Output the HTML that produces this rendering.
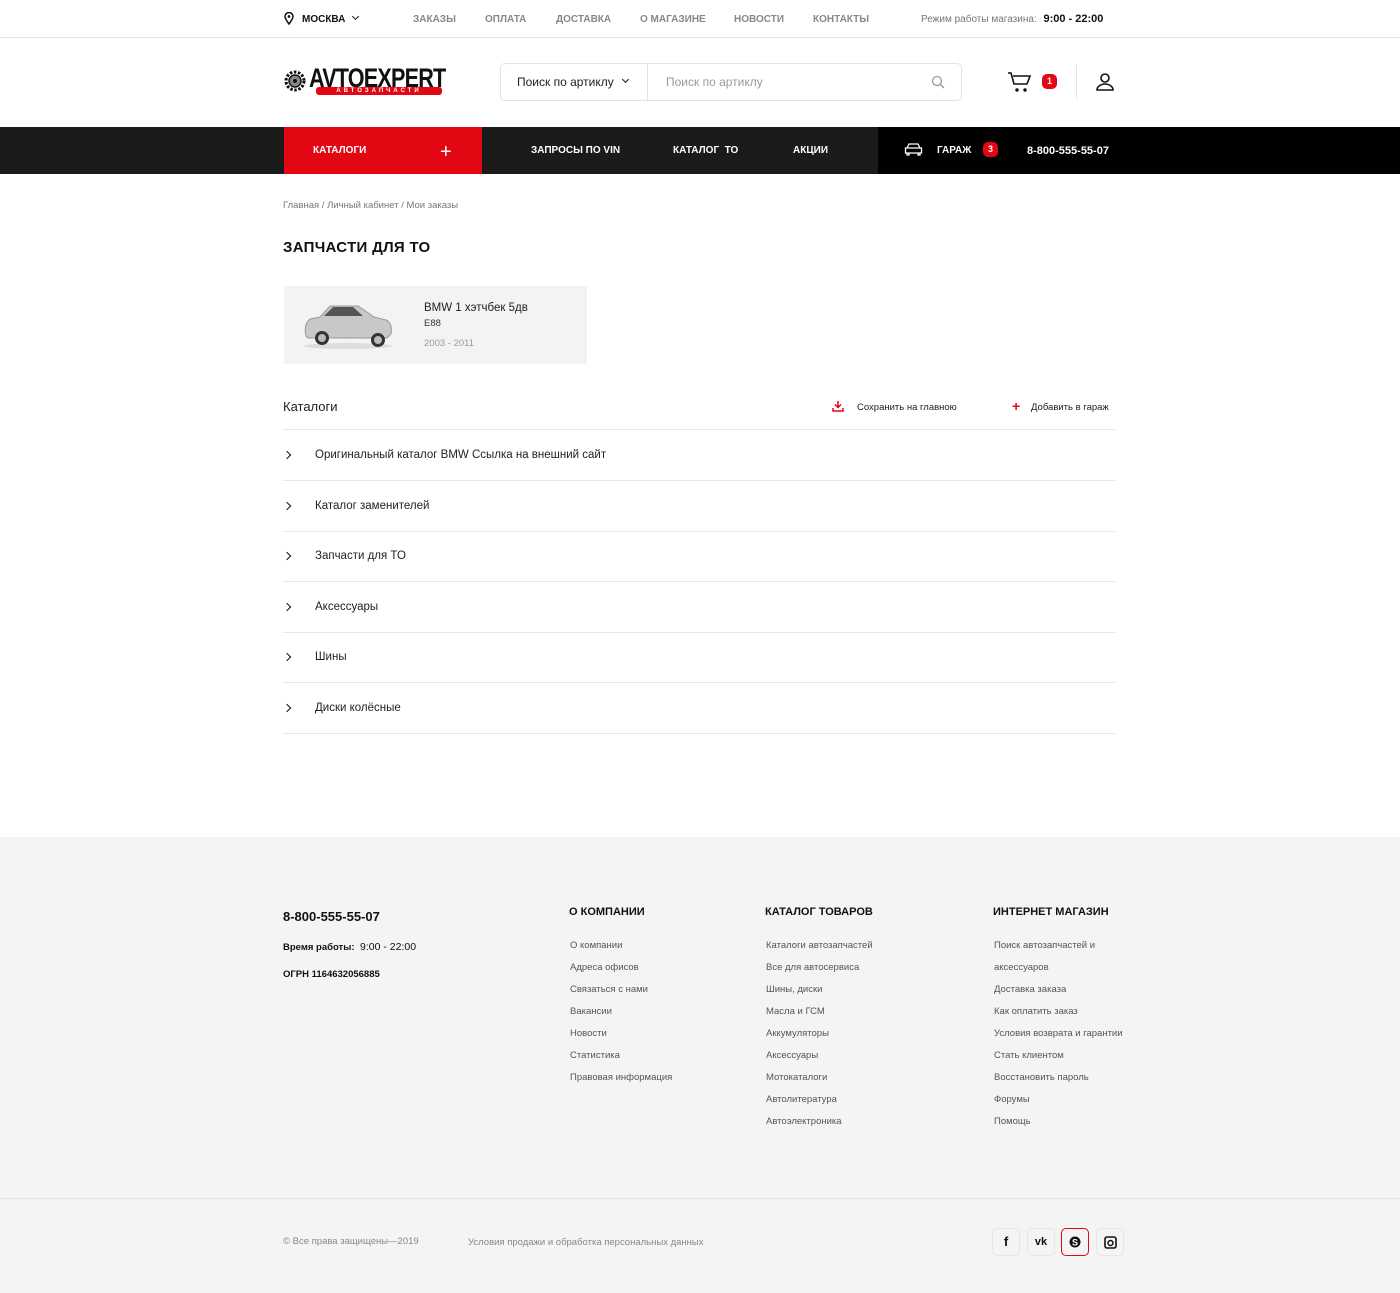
<!DOCTYPE html>
<html><head><meta charset="utf-8"><style>
*{margin:0;padding:0;box-sizing:border-box}
body{width:1400px;height:1293px;background:#fff;font-family:"Liberation Sans","Noto Sans CJK SC",sans-serif;color:#111;position:relative;overflow:hidden}
.a{position:absolute;white-space:nowrap}
.top{font-size:10px;font-weight:bold;color:#888;top:14px}
.nav{font-size:10px;font-weight:bold;color:#fff;top:145px}
.row{position:absolute;left:283px;width:832px;height:51px;border-bottom:1px solid #e6e6e6;font-size:11.5px;color:#222}
.row span{position:absolute;left:32px;top:19px}
.row i{position:absolute;left:1px;top:22px;width:6px;height:6px;border-top:1.5px solid #111;border-right:1.5px solid #111;transform:rotate(45deg)}
.fh{font-size:11px;font-weight:bold;top:906px}
.fl{font-size:9.5px;color:#555;line-height:22px;top:935px}
.soc{position:absolute;top:1228px;width:28px;height:28px;border:1px solid #e6e6e6;border-radius:5px;background:#f4f4f4;font-size:13px;font-weight:bold;text-align:center;line-height:26px}
</style></head><body>
<div class="a" style="top:0;left:0;width:1400px;height:38px;border-bottom:1px solid #e4e4e4"></div>
<svg class="a" style="left:284px;top:12px" width="10" height="13" viewBox="0 0 10 13"><path d="M5 12C2 8 1 6 1 4.5a4 4 0 018 0C9 6 8 8 5 12z" fill="none" stroke="#111" stroke-width="1.5"/><circle cx="5" cy="4.5" r="1.4" fill="#111"/></svg>
<div class="a" style="left:302px;top:14px;font-size:10px;font-weight:bold">МОСКВА</div>
<div class="a" style="left:353px;top:14px;width:5px;height:5px;border-right:1.5px solid #111;border-bottom:1.5px solid #111;transform:rotate(45deg)"></div>
<div class="a top" style="left:413px">ЗАКАЗЫ</div>
<div class="a top" style="left:485px">ОПЛАТА</div>
<div class="a top" style="left:556px">ДОСТАВКА</div>
<div class="a top" style="left:640px">О МАГАЗИНЕ</div>
<div class="a top" style="left:734px">НОВОСТИ</div>
<div class="a top" style="left:813px">КОНТАКТЫ</div>
<div class="a" style="left:921px;top:13px;font-size:10px;color:#777">Режим работы магазина: <b style="color:#111;font-size:11px;margin-left:4px">9:00 - 22:00</b></div>

<!-- logo -->
<svg class="a" style="left:284px;top:70px" width="22" height="22" viewBox="0 0 22 22"><circle cx="11" cy="11" r="9" fill="none" stroke="#111" stroke-width="3" stroke-dasharray="2.5 1.6"/><circle cx="11" cy="11" r="6" fill="#888" stroke="#111" stroke-width="1.5"/><circle cx="11" cy="11" r="2" fill="#111"/></svg>
<div class="a" style="left:309px;top:65px;font-size:27px;font-weight:900;letter-spacing:-1px;transform:scaleX(0.8);transform-origin:0 0;line-height:27px">AVTOEXPERT</div>
<div class="a" style="left:316px;top:87px;width:126px;height:8px;background:#e30613;border-radius:3px;color:#fff;font-size:6px;font-weight:bold;letter-spacing:3px;text-align:center;line-height:8px">АВТОЗАПЧАСТИ</div>

<div class="a" style="left:500px;top:63px;width:462px;height:38px;border:1px solid #e3e3e3;border-radius:5px"></div>
<div class="a" style="left:647px;top:64px;width:1px;height:36px;background:#e3e3e3"></div>
<div class="a" style="left:517px;top:75px;font-size:12px;color:#222">Поиск по артиклу</div>
<div class="a" style="left:623px;top:77px;width:5px;height:5px;border-right:1.5px solid #111;border-bottom:1.5px solid #111;transform:rotate(45deg)"></div>
<div class="a" style="left:666px;top:75px;font-size:12px;color:#999">Поиск по артиклу</div>
<svg class="a" style="left:931px;top:75px" width="14" height="14"><circle cx="6" cy="6" r="4.5" fill="none" stroke="#999" stroke-width="1.3"/><path d="M9.5 9.5L13 13" stroke="#999" stroke-width="1.3"/></svg>
<svg class="a" style="left:1007px;top:72px" width="26" height="22" viewBox="0 0 26 22"><path d="M1 1h3l3 11h13l3-8H6" fill="none" stroke="#111" stroke-width="1.6"/><circle cx="10" cy="18" r="1.7" fill="#111"/><circle cx="18" cy="18" r="1.7" fill="#111"/></svg>
<div class="a" style="left:1042px;top:74px;width:15px;height:15px;border-radius:5px;background:#e30613;color:#fff;font-size:9px;font-weight:bold;text-align:center;line-height:15px">1</div>
<div class="a" style="left:1076px;top:65px;width:1px;height:34px;background:#e3e3e3"></div>
<svg class="a" style="left:1095px;top:72px" width="20" height="20" viewBox="0 0 20 20"><circle cx="10" cy="6" r="4" fill="none" stroke="#111" stroke-width="1.6"/><path d="M2 18a8 6 0 0116 0z" fill="none" stroke="#111" stroke-width="1.6"/></svg>

<!-- nav -->
<div class="a" style="left:0;top:127px;width:878px;height:47px;background:#1b1b1b"></div>
<div class="a" style="left:878px;top:127px;width:522px;height:47px;background:#000"></div>
<div class="a" style="left:284px;top:127px;width:198px;height:47px;background:#e30613"></div>
<div class="a nav" style="left:313px">КАТАЛОГИ</div>
<div class="a" style="left:440px;top:145px;color:#fff;font-size:20px;line-height:14px">+</div>
<div class="a nav" style="left:531px">ЗАПРОСЫ ПО VIN</div>
<div class="a nav" style="left:673px">КАТАЛОГ&nbsp; ТО</div>
<div class="a nav" style="left:793px">АКЦИИ</div>
<svg class="a" style="left:904px;top:142px" width="19" height="14" viewBox="0 0 19 14"><path d="M3 6l2-4h9l2 4M1.5 6h16v5h-16zM3 11v2h2v-2M14 11v2h2v-2" fill="none" stroke="#fff" stroke-width="1.3"/></svg>
<div class="a nav" style="left:937px">ГАРАЖ</div>
<div class="a" style="left:983px;top:142px;width:15px;height:15px;border-radius:5px;background:#e30613;color:#fff;font-size:9px;font-weight:bold;text-align:center;line-height:15px">3</div>
<div class="a nav" style="left:1027px;font-size:11px">8-800-555-55-07</div>

<div class="a" style="left:283px;top:200px;font-size:9.5px;color:#777">Главная / Личный кабинет / Мои заказы</div>
<div class="a" style="left:283px;top:239px;font-size:15px;font-weight:bold;letter-spacing:.3px">ЗАПЧАСТИ ДЛЯ ТО</div>

<div class="a" style="left:284px;top:286px;width:303px;height:78px;background:#f3f3f3"></div>
<svg class="a" style="left:300px;top:300px" width="96" height="50" viewBox="0 0 96 50"><ellipse cx="48" cy="46" rx="44" ry="3" fill="#ddd"/><path d="M6 36c-2-8 0-14 4-17l10-2 10-11h28l16 11 12 3c5 2 6 8 5 14l-4 4H8z" fill="#c8c8c8" stroke="#999"/><path d="M24 16l9-9h20l10 9z" fill="#555"/><circle cx="22" cy="38" r="7" fill="#333"/><circle cx="22" cy="38" r="4" fill="#bbb"/><circle cx="78" cy="40" r="7" fill="#333"/><circle cx="78" cy="40" r="4" fill="#bbb"/></svg>
<div class="a" style="left:424px;top:302px;font-size:11.5px;color:#222">BMW 1 хэтчбек 5дв</div>
<div class="a" style="left:424px;top:318px;font-size:9.5px;color:#333">E88</div>
<div class="a" style="left:424px;top:338px;font-size:9.5px;color:#999">2003 - 2011</div>

<div class="a" style="left:283px;top:399px;font-size:13px;color:#222">Каталоги</div>
<svg class="a" style="left:832px;top:400px" width="12" height="12"><path d="M6 1v6M3 4.5l3 3 3-3M1 8v3h10V8" fill="none" stroke="#e30613" stroke-width="1.5"/></svg>
<div class="a" style="left:857px;top:402px;font-size:9.5px;color:#222">Сохранить на главною</div>
<div class="a" style="left:1012px;top:398px;font-size:14px;font-weight:bold;color:#e30613">+</div>
<div class="a" style="left:1031px;top:402px;font-size:9.5px;color:#222">Добавить в гараж</div>
<div class="a" style="left:283px;top:429px;width:832px;height:1px;background:#e6e6e6"></div>
<div class="row" style="top:430px"><i></i><span>Оригинальный каталог BMW Ссылка на внешний сайт</span></div>
<div class="row" style="top:481px"><i></i><span>Каталог заменителей</span></div>
<div class="row" style="top:531px"><i></i><span>Запчасти для ТО</span></div>
<div class="row" style="top:582px"><i></i><span>Аксессуары</span></div>
<div class="row" style="top:632px"><i></i><span>Шины</span></div>
<div class="row" style="top:683px"><i></i><span>Диски колёсные</span></div>

<!-- footer -->
<div class="a" style="left:0;top:837px;width:1400px;height:456px;background:#f4f4f4"></div>
<div class="a" style="left:283px;top:909px;font-size:13px;font-weight:bold">8-800-555-55-07</div>
<div class="a" style="left:283px;top:941px;font-size:9.5px;font-weight:bold">Время работы: <span style="font-weight:normal;font-size:10.5px">&nbsp;9:00 - 22:00</span></div>
<div class="a" style="left:283px;top:969px;font-size:9.5px;font-weight:bold">ОГРН 1164632056885</div>
<div class="a fh" style="left:569px">О КОМПАНИИ</div>
<div class="a fh" style="left:765px">КАТАЛОГ ТОВАРОВ</div>
<div class="a fh" style="left:993px">ИНТЕРНЕТ МАГАЗИН</div>
<div class="a fl" style="left:570px">О компании<br>Адреса офисов<br>Связаться с нами<br>Вакансии<br>Новости<br>Статистика<br>Правовая информация</div>
<div class="a fl" style="left:766px">Каталоги автозапчастей<br>Все для автосервиса<br>Шины, диски<br>Масла и ГСМ<br>Аккумуляторы<br>Аксессуары<br>Мотокаталоги<br>Автолитература<br>Автоэлектроника</div>
<div class="a fl" style="left:994px">Поиск автозапчастей и<br>аксессуаров<br>Доставка заказа<br>Как оплатить заказ<br>Условия возврата и гарантии<br>Стать клиентом<br>Восстановить пароль<br>Форумы<br>Помощь</div>
<div class="a" style="left:0;top:1198px;width:1400px;height:1px;background:#e2e2e2"></div>
<div class="a" style="left:283px;top:1236px;font-size:9.5px;color:#888">© Все права защищены—2019</div>
<div class="a" style="left:468px;top:1237px;font-size:9.5px;color:#888">Условия продажи и обработка персональных данных</div>
<div class="soc" style="left:992px">f</div>
<div class="soc" style="left:1027px;font-size:11px">vk</div>
<div class="soc" style="left:1061px;border:1.5px solid #e30613"><svg width="14" height="14" style="margin-top:6px" viewBox="0 0 14 14"><circle cx="7" cy="7" r="5.5" fill="#111"/><text x="7" y="10.5" font-size="9" font-weight="bold" fill="#fff" text-anchor="middle" font-family="Liberation Sans">S</text></svg></div>
<div class="soc" style="left:1096px"><svg width="13" height="13" style="margin-top:7px" viewBox="0 0 13 13"><rect x="1" y="1" width="11" height="11" rx="2" fill="none" stroke="#111" stroke-width="1.6"/><circle cx="6.5" cy="7" r="2.5" fill="none" stroke="#111" stroke-width="1.5"/></svg></div>
</body></html>
